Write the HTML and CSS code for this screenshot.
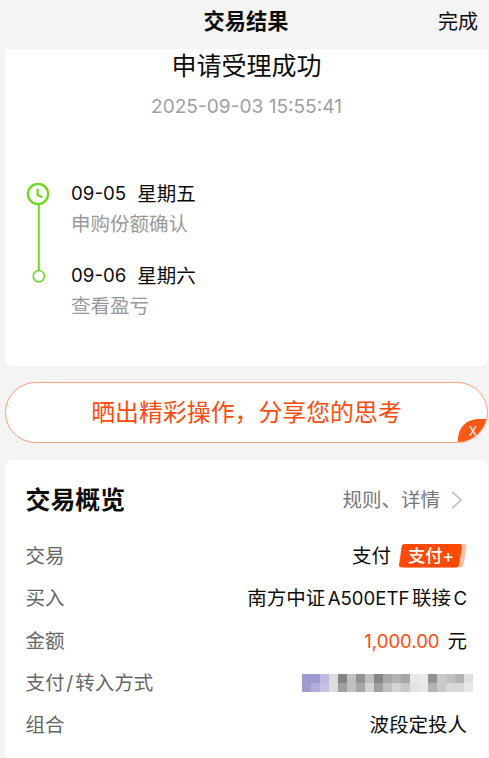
FILE: index.html
```html
<!DOCTYPE html>
<html lang="zh-CN">
<head>
<meta charset="utf-8">
<title>交易结果</title>
<link rel="stylesheet" href="styles.css">
</head>
<body>
<header class="nav">
  <span></span>
  <h1 class="nav-title">交易结果</h1>
  <span class="nav-done">完成</span>
</header>
<main class="page">
  <section class="card result">
    <h2 class="result-title">申请受理成功</h2>
    <time class="result-time">2025-09-03 15:55:41</time>
    <div class="timeline">
      <svg class="track" width="24" height="102" viewBox="0 0 24 102" fill="none" stroke="#6fd61c">
        <path d="M12.8 22.5V88" stroke-width="1.9"/>
        <circle cx="12" cy="12" r="10.1" stroke-width="2.2"/>
        <path d="M11.6 6.8V13L16.3 15.3" stroke-width="2.2"/>
        <circle cx="12.8" cy="94.2" r="5.6" stroke-width="1.5"/>
      </svg>
      <div class="steps">
        <div class="step">
          <p class="step-date"><span class="day">09-05</span><span>星期五</span></p>
          <p class="step-text">申购份额确认</p>
        </div>
        <div class="step">
          <p class="step-date"><span class="day">09-06</span><span>星期六</span></p>
          <p class="step-text">查看盈亏</p>
        </div>
      </div>
    </div>
  </section>

  <section class="banner">
    <span class="banner-text">晒出精彩操作，分享您的思考</span>
    <span class="banner-close">X</span>
  </section>

  <section class="card overview">
    <div class="overview-head">
      <h2 class="overview-title">交易概览</h2>
      <span class="more">规则、详情
        <svg width="12" height="20" viewBox="0 0 12 20" fill="none" stroke="#c8c8c8" stroke-width="2"><path d="M1.2 1.6L10 10L1.2 18.4"/></svg>
      </span>
    </div>
    <div class="row">
      <span class="label">交易</span>
      <span class="value pay">支付<span class="badge">
        <svg class="badge-bg" width="68" height="24" viewBox="0 0 68 24"><path fill="#ffc1a8" d="M8 0H65.500Q68 0 67.600 2.500L64.500 21Q64 23.500 61.500 23.500H5Z"/><path fill="#ff4a06" d="M5.500 0H60.500Q63.300 0 62.900 2.800L60 20.800Q59.500 23.500 57 23.500H2.300Q-.3 23.500 .1 20.800L2.600 2.700Q3 0 5.500 0Z"/></svg>
        <span class="badge-text">支付+</span></span></span>
    </div>
    <div class="row"><span class="label">买入</span><span class="value fund">南方中证<span class="latin">A500ETF</span>联接<span class="latin">C</span></span></div>
    <div class="row"><span class="label">金额</span><span class="value"><span class="amount">1,000.00</span>元</span></div>
    <div class="row">
      <span class="label">支付<span class="slash">/</span>转入方式</span>
      <svg class="mosaic" width="171" height="18" viewBox="0 0 19 2" shape-rendering="crispEdges">
        <path fill="#9c9bcd" d="M0 0h2v1H0z"/><path fill="#bdbade" d="M2 0h1v1H2z"/><path fill="#dcdcdc" d="M3 0h1v2H3z"/><path fill="#848484" d="M4 0h1v1H4zM8 0h1v1H8z"/><path fill="#c0c0c0" d="M5 0h1v2H5zM7 0h1v1H7zM16 0h1v1h-1zM9 1h1v1H9z"/><path fill="#929292" d="M6 0h1v1H6zM14 0h1v1h-1z"/><path fill="#a7a7a7" d="M9 0h1v1H9zM11 0h1v1h-1zM6 1h1v1H6z"/><path fill="#b2b2b2" d="M10 0h1v1h-1zM17 0h1v1h-1zM14 1h1v1h-1z"/><path fill="#e8e8e8" d="M12 0h1v1h-1zM13 1h1v1h-1zM18 1h1v1h-1z"/><path fill="#ebebeb" d="M13 0h1v1h-1z"/><path fill="#c9c9c9" d="M15 0h1v2h-1zM11 1h1v1h-1z"/><path fill="#dfdfdf" d="M18 0h1v1h-1z"/><path fill="#9f9bce" d="M0 1h1v1H0z"/><path fill="#b1afd8" d="M1 1h1v1H1z"/><path fill="#c4c2e2" d="M2 1h1v1H2z"/><path fill="#a0a0a0" d="M4 1h1v1H4zM8 1h1v1H8z"/><path fill="#d3d3d3" d="M7 1h1v1H7zM10 1h1v1h-1z"/><path fill="#e4e4e4" d="M12 1h1v1h-1z"/><path fill="#d7d7d7" d="M16 1h2v1h-2z"/>
      </svg>
    </div>
    <div class="row"><span class="label">组合</span><span class="value">波段定投人</span></div>
  </section>
</main>
</body>
</html>
```

FILE: styles.css
```css
* { box-sizing: border-box; }
body {
  margin: 0;
  height: 758px;
  overflow: hidden;
  background: #f4f4f4;
  color: #0c0c0c;
  font-family: Inter, "Noto Sans CJK SC", sans-serif;
  font-size: 19.5px;
}
h1, h2, p { margin: 0; }
.nav {
  display: grid;
  grid-template-columns: 1fr auto 1fr;
  height: 49px;
  padding: 0 11px 0 14px;
}
.nav-title { font-size: 21.2px; line-height: 42px; font-weight: 700; }
.nav-done { font-size: 20px; line-height: 44px; text-align: right; }
.page { padding: 0 1px 0 5px; }
.card { background: #fff; border-radius: 8px; }
.result { height: 317px; border-radius: 0 0 8px 8px; text-align: center; }
.result-title { font-size: 25px; line-height: 34px; font-weight: 400; }
.result-time {
  display: block;
  margin-top: 11px;
  font-size: 19.1px;
  line-height: 24px;
  color: #a0a0a0;
}
.timeline { display: flex; gap: 21px; padding: 64px 0 0 21px; text-align: left; }
.steps { display: grid; gap: 22px; }
.step-date { display: flex; gap: 11px; line-height: 30px; margin-top: -3px; }
.day { font-size: 18.7px; }
.step-text { line-height: 30px; margin-bottom: 3px; color: #999; }
.banner {
  position: relative;
  display: flex;
  justify-content: center;
  height: 61px;
  margin: 16px 0 17px;
  border: 1px solid #ff9e7d;
  border-radius: 31px;
  background: #fff;
  overflow: hidden;
}
.banner-text { font-size: 23.9px; line-height: 60px; color: #ff4a0d; }
.banner-close {
  position: absolute;
  right: -1px;
  bottom: -1px;
  width: 30px;
  height: 24px;
  border-top-left-radius: 20px;
  background: #fd5914;
  color: #fff;
  font-size: 12.5px;
  line-height: 25px;
  text-align: center;
}
.overview { height: 300px; padding: 20px 21px 0; }
.overview-head { display: flex; justify-content: space-between; height: 55px; line-height: 40px; }
.overview-title { margin-left: -0.5px; font-size: 24.9px; font-weight: 700; }
.more { display: flex; align-items: center; gap: 11px; height: 40px; padding-right: 4px; color: #777; }
.row {
  display: flex;
  justify-content: space-between;
  align-items: center;
  height: 42.3px;
  line-height: 42px;
}
.label { margin-left: -0.5px; color: #666; }
.slash { margin: 0 1.8px; }
.pay { display: flex; align-items: center; gap: 8px; }
.badge { position: relative; display: flex; width: 68px; height: 24px; }
.badge-bg { position: absolute; inset: 0; }
.badge-text { position: relative; padding-left: 9px; font-size: 17.3px; line-height: 23px; color: #fff; font-weight: 500; }
.latin { margin-left: 2.5px; font-size: 18.6px; }
.fund .latin:first-child { margin-right: 2.5px; }
.amount { margin-right: 8px; font-size: 18.5px; color: #ff4a0d; }
.mosaic { margin-right: -6px; }
```
